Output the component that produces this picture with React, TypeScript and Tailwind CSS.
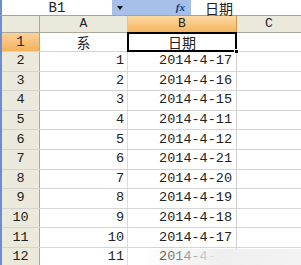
import React from 'react';

const rows: { a: string; b: string }[] = [
  { a: '1', b: '2014-4-17' },
  { a: '2', b: '2014-4-16' },
  { a: '3', b: '2014-4-15' },
  { a: '4', b: '2014-4-11' },
  { a: '5', b: '2014-4-12' },
  { a: '6', b: '2014-4-21' },
  { a: '7', b: '2014-4-20' },
  { a: '8', b: '2014-4-19' },
  { a: '9', b: '2014-4-18' },
  { a: '10', b: '2014-4-17' },
  { a: '11', b: '2014-4-13' },
  { a: '12', b: '2014-4-14' },
];

const mono = "font-['Liberation_Mono','Noto_Sans_CJK_SC',monospace]";
const cjk = "font-['Noto_Sans_CJK_SC',sans-serif]";

export default function App() {
  return (
    <div className={`relative w-[301px] h-[265px] overflow-hidden bg-white text-[#222] ${mono}`}>
      {/* Name box + formula bar */}
      <div className="flex h-[16px] border-b border-[#8ea4c8]">
        <div className="w-[2px] bg-[#6d8ccc]" />
        <div className="w-[110px] bg-white flex items-center justify-center text-[14px] leading-none">B1</div>
        <div className="w-[79px] bg-[#a7c0ea] flex items-center">
          <div className="w-[16px] flex justify-center">
            <div className="w-0 h-0 border-l-[3px] border-r-[3px] border-t-[4px] border-l-transparent border-r-transparent border-t-[#111]" />
          </div>
          <div className="flex-1" />
          <span className="font-['Liberation_Serif',serif] italic font-bold text-[11px] text-[#1c3b7a] mr-[6px]">fx</span>
        </div>
        <div className={`flex-1 bg-white flex items-center pl-[14px] text-[14px] leading-none ${cjk}`}>日期</div>
      </div>

      <div className="flex">
        <div className="w-[2px] bg-[#6d8ccc]" />
        <div className="flex-1">
          {/* Column headers */}
          <div className="flex h-[17px] text-[13px] border-b border-[#a9a797]">
            <div className="w-[38px] bg-[#ebe9dc] border-r border-[#a9a797]" />
            <div className="w-[88px] bg-[#ebe9dc] border-r border-[#c9c7b8] flex items-center justify-center">A</div>
            <div className="w-[109px] bg-gradient-to-b from-[#fbd9a4] to-[#f5b45c] border-r border-[#c99a4e] flex items-center justify-center">B</div>
            <div className="flex-1 bg-[#ebe9dc] flex items-center justify-center">C</div>
          </div>

          {/* Row 1 */}
          <div className="flex h-[19px] text-[14px] border-b border-[#d4d4d4]">
            <div className="w-[38px] bg-gradient-to-b from-[#fbd29a] to-[#f4b25a] border-r border-[#a9a797] flex items-center justify-center">1</div>
            <div className={`w-[88px] border-r border-[#d4d4d4] flex items-center justify-center ${cjk}`}>系</div>
            <div className={`relative w-[109px] border-r border-[#d4d4d4] flex items-center justify-center ${cjk}`}>
              日期
              <div className="absolute -left-[1px] -top-[1px] -right-[1px] -bottom-[1px] border-2 border-black" />
              <div className="absolute -right-[3px] -bottom-[3px] w-[5px] h-[5px] bg-black border border-white" />
            </div>
            <div className="flex-1" />
          </div>

          {/* Data rows */}
          {rows.map((r, i) => (
            <div key={i} className="flex h-[19.6px] text-[13.5px] border-b border-[#d4d4d4]">
              <div className="w-[38px] bg-[#ebe9dc] border-r border-[#a9a797] flex items-center justify-center">{i + 2}</div>
              <div className="w-[88px] border-r border-[#dcdcdc] flex items-center justify-end pr-[3px]">{r.a}</div>
              <div className="w-[109px] border-r border-[#d0d0d0] flex items-center justify-end pr-[4px]">{r.b}</div>
              <div className="flex-1" />
            </div>
          ))}
        </div>
      </div>

      {/* Faded bottom edge of the photo */}
      <div className="absolute left-[140px] right-0 top-[249px] bottom-0 bg-gradient-to-r from-transparent via-[#efefef] to-[#f3f3f3]" />
    </div>
  );
}
